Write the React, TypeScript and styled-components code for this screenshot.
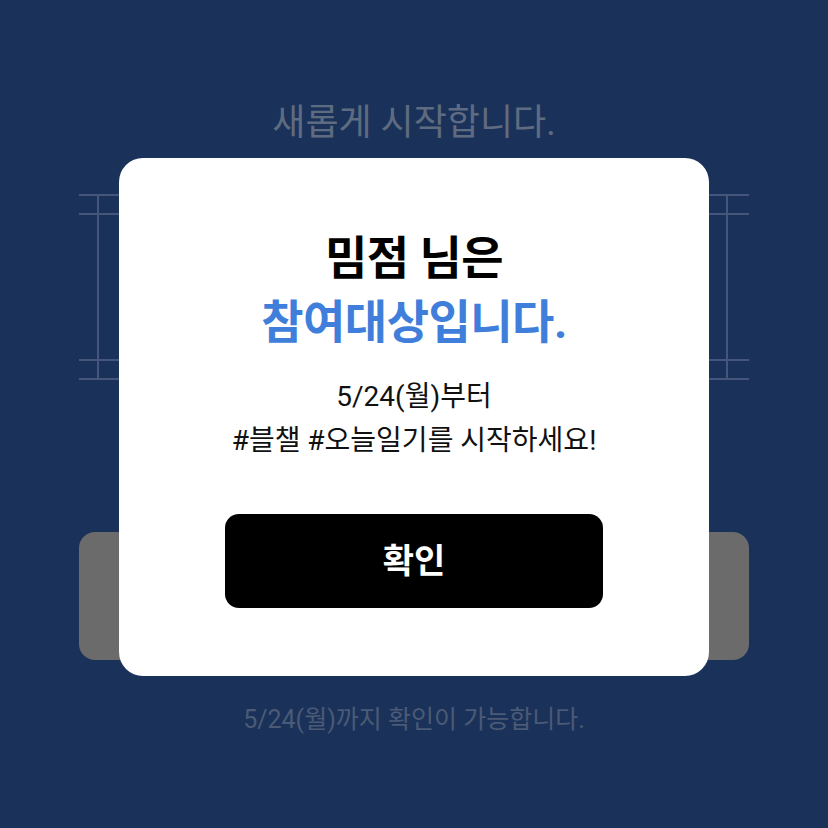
import React from 'react';
import styled, { createGlobalStyle } from 'styled-components';

const GlobalStyle = createGlobalStyle`
    * {
        box-sizing: border-box;
    }
    body {
        margin: 0;
        font-family: Roboto, "Noto Sans CJK KR", "Noto Sans", sans-serif;
        background: #1a3259;
    }
`;

const Page = styled.div`
    position: relative;
    min-height: 100vh;
    background: #1a3259;
    padding: 103px 79px 0;
    display: flex;
    flex-direction: column;
    align-items: stretch;
`;

const Heading = styled.h1`
    margin: 0 0 51px;
    font-size: 36px;
    font-weight: 400;
    line-height: 40px;
    text-align: center;
    color: #5f6b80;
`;

// 테두리 격자: 배경색이 선, 셀이 바탕색
const Frame = styled.div`
    display: grid;
    grid-template-columns: 18px 1fr 21px;
    grid-template-rows: 17px 1fr 17px;
    gap: 2px;
    height: 186px;
    padding: 2px 0;
    background: #45567a;
`;

const Cell = styled.div`
    background: #1a3259;
`;

const GrayBox = styled.div`
    margin-top: 152px;
    height: 128px;
    border-radius: 16px;
    background: #6b6b6b;
`;

const Footer = styled.p`
    margin: 45px 0 0;
    font-size: 25px;
    line-height: 30px;
    text-align: center;
    color: #4b5a76;
`;

const Overlay = styled.div`
    position: absolute;
    inset: 0;
    display: flex;
    justify-content: center;
    padding-top: 158px;
`;

const Modal = styled.div`
    width: 590px;
    height: 518px;
    background: #ffffff;
    border-radius: 24px;
    padding: 68px 0 0;
    display: flex;
    flex-direction: column;
    align-items: center;
`;

const Title = styled.h2<{ accent?: boolean }>`
    margin: 0;
    font-size: 46px;
    font-weight: 700;
    line-height: 64px;
    text-align: center;
    letter-spacing: -0.5px;
    color: ${(props) => (props.accent ? '#3f7fdb' : '#000000')};
`;

const Message = styled.p`
    margin: 21px 0 0;
    font-size: 28px;
    line-height: 44px;
    text-align: center;
    color: #111111;
`;

const ConfirmButton = styled.button`
    margin-top: 51px;
    width: 378px;
    height: 94px;
    padding: 0 0 5px;
    border: none;
    border-radius: 14px;
    background: #000000;
    color: #ffffff;
    font-family: inherit;
    font-size: 34px;
    font-weight: 700;
    cursor: pointer;
`;

function App() {
    return (
        <>
            <GlobalStyle />
            <Page>
                <Heading>새롭게 시작합니다.</Heading>
                <Frame>
                    {Array.from({ length: 9 }).map((_, i) => (
                        <Cell key={i} />
                    ))}
                </Frame>
                <GrayBox />
                <Footer>5/24(월)까지 확인이 가능합니다.</Footer>
                <Overlay>
                    <Modal>
                        <Title>밈점 님은</Title>
                        <Title accent>참여대상입니다.</Title>
                        <Message>
                            5/24(월)부터
                            <br />
                            #블챌 #오늘일기를 시작하세요!
                        </Message>
                        <ConfirmButton>확인</ConfirmButton>
                    </Modal>
                </Overlay>
            </Page>
        </>
    );
}

export default App;
